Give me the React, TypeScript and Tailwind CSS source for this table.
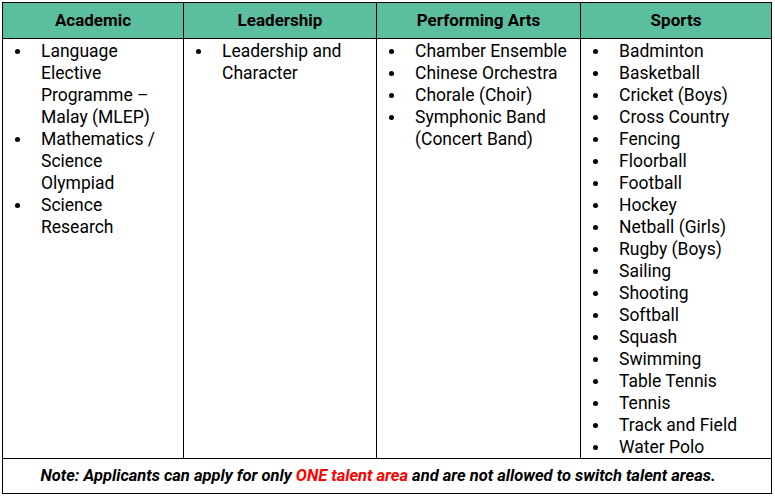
const COLUMNS = [
  {
    title: "Academic",
    width: "w-[181px]",
    textWidth: "w-[124px]",
    items: [
      "Language Elective Programme – Malay (MLEP)",
      "Mathematics / Science Olympiad",
      "Science Research",
    ],
  },
  {
    title: "Leadership",
    width: "w-[193px]",
    textWidth: "w-[150px]",
    items: ["Leadership and Character"],
  },
  {
    title: "Performing Arts",
    width: "w-[204px]",
    textWidth: "w-[162px]",
    items: [
      "Chamber Ensemble",
      "Chinese Orchestra",
      "Chorale (Choir)",
      "Symphonic Band (Concert Band)",
    ],
  },
  {
    title: "Sports",
    width: "w-[191px]",
    textWidth: "w-[150px]",
    items: [
      "Badminton",
      "Basketball",
      "Cricket (Boys)",
      "Cross Country",
      "Fencing",
      "Floorball",
      "Football",
      "Hockey",
      "Netball (Girls)",
      "Rugby (Boys)",
      "Sailing",
      "Shooting",
      "Softball",
      "Squash",
      "Swimming",
      "Table Tennis",
      "Tennis",
      "Track and Field",
      "Water Polo",
    ],
  },
];

function Bullet({ text, textWidth }: { text: string; textWidth: string }) {
  return (
    <li className="flex">
      <span className="flex h-[22px] w-[29px] shrink-0 items-center pl-[3px]">
        <span className="h-[5px] w-[5px] rounded-full bg-black" />
      </span>
      <span className={textWidth}>{text}</span>
    </li>
  );
}

export default function App() {
  return (
    <div
      className="bg-white p-[2px] text-black"
      style={{ fontFamily: "Roboto, 'Liberation Sans', sans-serif" }}
    >
      <table className="w-[770px] table-fixed border-collapse border border-black">
        <thead>
          <tr className="bg-[#5bbf9f]">
            {COLUMNS.map((c) => (
              <th
                key={c.title}
                className={`${c.width} h-[36px] border border-black text-center text-[17px] font-bold`}
              >
                {c.title}
              </th>
            ))}
          </tr>
        </thead>
        <tbody>
          <tr>
            {COLUMNS.map((c) => (
              <td
                key={c.title}
                className="border border-black pt-[1px] pl-[9px] align-top text-[17.5px] leading-[22px]"
              >
                <ul>
                  {c.items.map((i) => (
                    <Bullet key={i} text={i} textWidth={c.textWidth} />
                  ))}
                </ul>
              </td>
            ))}
          </tr>
          <tr>
            <td
              colSpan={4}
              className="h-[35px] border border-black pr-[18px] text-center text-[16.5px] font-bold italic"
            >
              Note: Applicants can apply for only{" "}
              <span className="text-[#ff0000]">ONE talent area</span> and are
              not allowed to switch talent areas.
            </td>
          </tr>
        </tbody>
      </table>
    </div>
  );
}
